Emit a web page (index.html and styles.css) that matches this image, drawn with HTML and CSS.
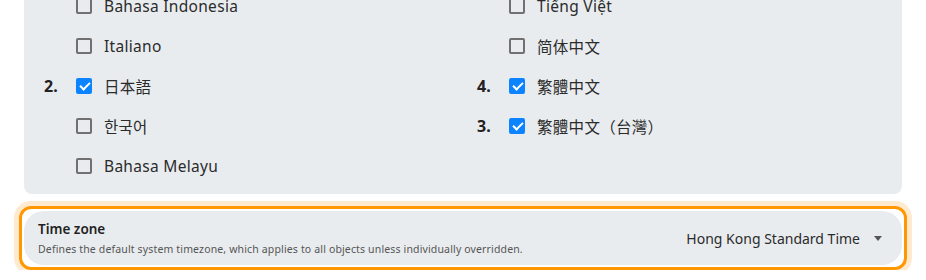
FILE: index.html
```html
<!DOCTYPE html>
<html lang="en">
<head>
    <meta charset="UTF-8">
    <meta name="viewport" content="width=device-width, initial-scale=1.0">
    <title>Settings</title>
    <link rel="stylesheet" href="styles.css">
</head>
<body>
    <div class="settings">
        <!-- Language list (scrolled, top part hidden) -->
        <div class="lang-panel">
            <div class="lang-col">
                <label class="lang-item"><span class="order"></span><span class="box"></span><span class="name">Bahasa Indonesia</span></label>
                <label class="lang-item"><span class="order"></span><span class="box"></span><span class="name">Italiano</span></label>
                <label class="lang-item"><span class="order">2.</span><span class="box checked"></span><span class="name">日本語</span></label>
                <label class="lang-item"><span class="order"></span><span class="box"></span><span class="name">한국어</span></label>
                <label class="lang-item"><span class="order"></span><span class="box"></span><span class="name">Bahasa Melayu</span></label>
            </div>
            <div class="lang-col">
                <label class="lang-item"><span class="order"></span><span class="box"></span><span class="name">Tiếng Việt</span></label>
                <label class="lang-item"><span class="order"></span><span class="box"></span><span class="name">简体中文</span></label>
                <label class="lang-item"><span class="order">4.</span><span class="box checked"></span><span class="name">繁體中文</span></label>
                <label class="lang-item"><span class="order">3.</span><span class="box checked"></span><span class="name">繁體中文（台灣）</span></label>
            </div>
        </div>

        <!-- Time zone row, focused -->
        <div class="setting-focus">
            <div class="setting-row">
                <div class="setting-info">
                    <div class="setting-title">Time zone</div>
                    <div class="setting-desc">Defines the default system timezone, which applies to all objects unless individually overridden.</div>
                </div>
                <div class="select">
                    <span>Hong Kong Standard Time</span>
                    <svg class="caret" width="8" height="5" viewBox="0 0 8 5"><path d="M0 0h8L4 5z" fill="#555"/></svg>
                </div>
            </div>
        </div>
    </div>
</body>
</html>
```
FILE: styles.css
```css
body {
    margin: 0;
    background-color: #fff;
    font-family: "Noto Sans", "Noto Sans CJK TC", sans-serif;
    color: #2b2b2b;
    overflow: hidden;
}

.settings {
    padding: 0 24px;
    margin-top: -14px;
}

.lang-panel {
    display: grid;
    grid-template-columns: 433px 1fr;
    background-color: #e9ecef;
    border-radius: 8px;
    padding: 0 20px 8px;
}

.lang-item {
    display: flex;
    align-items: center;
    height: 40px;
    font-size: 15.5px;
    letter-spacing: 0.3px;
}

.order {
    width: 32px;
    font-weight: 700;
    font-size: 16px;
    letter-spacing: 0;
    color: #222;
}

.box {
    width: 16px;
    height: 16px;
    box-sizing: border-box;
    border: 2px solid #707070;
    border-radius: 2px;
    margin-right: 12px;
    position: relative;
}

.box.checked {
    background-color: #0d84ff;
    border-color: #0d84ff;
}

.box.checked::after {
    content: "";
    position: absolute;
    left: 4px;
    top: 0px;
    width: 4px;
    height: 8px;
    border: solid #fff;
    border-width: 0 2px 2px 0;
    transform: rotate(45deg);
}

.name {
    white-space: nowrap;
}

.setting-focus {
    margin: 12px -5px 0;
    border: 3px solid #ff9800;
    border-radius: 12px;
    padding: 2px;
    box-shadow: 0 0 0 5px #ffe9cf;
}

.setting-row {
    display: flex;
    align-items: center;
    justify-content: space-between;
    background-color: #e9ecef;
    border-radius: 20px;
    height: 54px;
    padding: 0 20px 0 14px;
}

.setting-title {
    font-size: 13.5px;
    font-weight: 600;
    color: #222;
}

.setting-desc {
    font-size: 10.5px;
    letter-spacing: 0.15px;
    color: #555;
    margin-top: 4px;
}

.select {
    display: flex;
    align-items: center;
    gap: 14px;
    font-size: 14px;
    color: #2b2b2b;
}
```
